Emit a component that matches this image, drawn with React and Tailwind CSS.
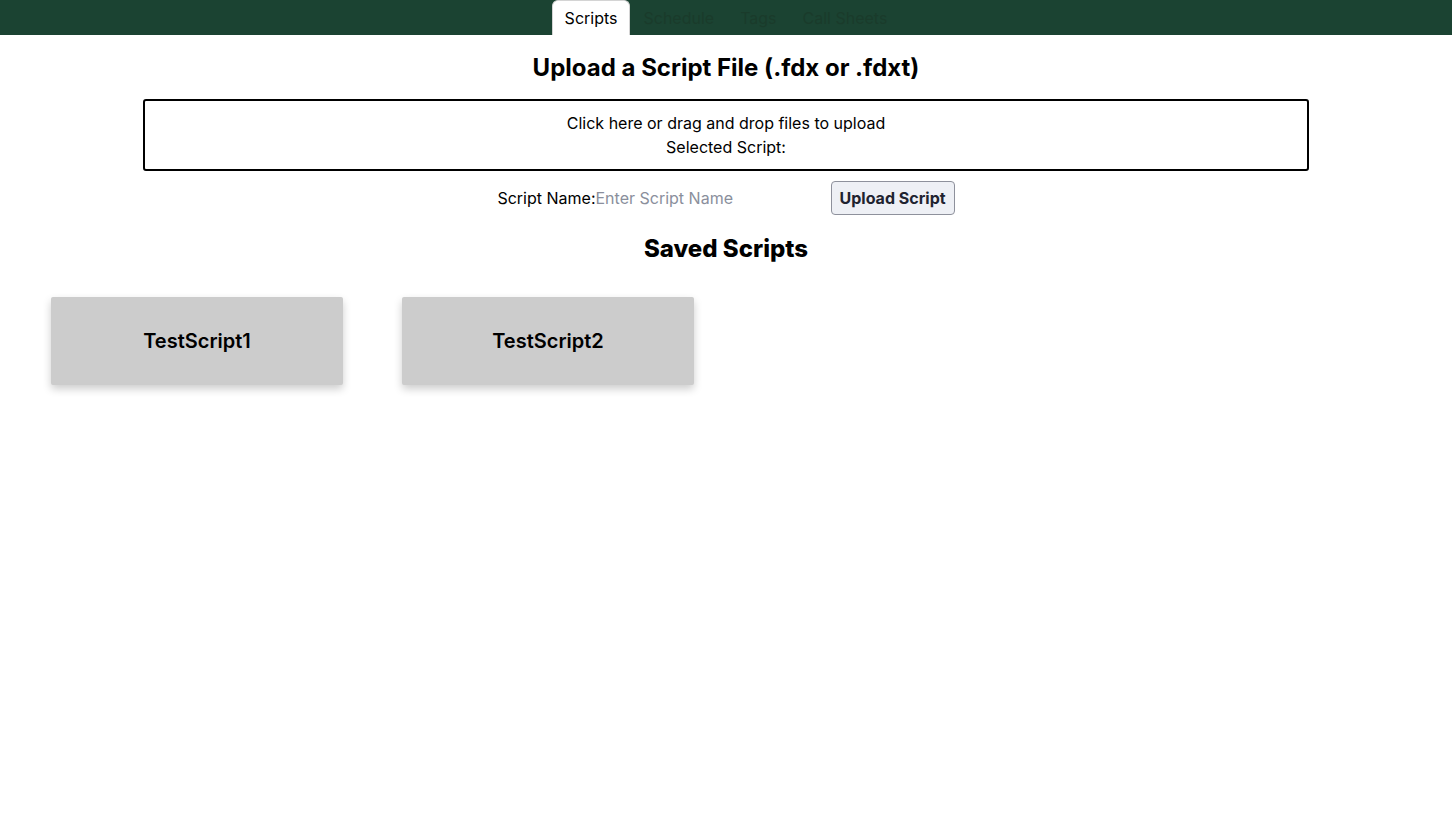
import React, { useState } from "react";

const tabs = ["Scripts", "Schedule", "Tags", "Call Sheets"];
const savedScripts = ["TestScript1", "TestScript2"];

const App = () => {
  const [active, setActive] = useState("Scripts");
  const [scriptName, setScriptName] = useState("");

  return (
    <div
      className="flex w-full min-h-screen flex-col bg-white text-black"
      style={{ fontFamily: "Inter, 'Noto Sans', sans-serif" }}
    >
      {/* top tabs */}
      <div className="flex w-full h-[35px] justify-center bg-[#1b4332]">
        <div className="flex h-full">
          {tabs.map((tab) => (
            <button
              key={tab}
              onClick={() => setActive(tab)}
              className={
                tab === active
                  ? "flex h-full items-center pl-[12px] pr-3 bg-white text-black rounded-t-md border border-b-0 border-[#d4d4d4] text-base"
                  : "flex h-full items-center px-[13px] text-[#1a3b2b] text-base"
              }
            >
              {tab}
            </button>
          ))}
        </div>
      </div>

      <div className="flex w-full flex-col items-center">
        <h2 className="mt-[18px] text-2xl font-bold leading-[30px]">
          Upload a Script File (.fdx or .fdxt)
        </h2>

        <div className="mt-[16px] flex w-4/5 box-content flex-col items-center border-2 border-black rounded-[3px] py-[10px] text-base leading-6 cursor-pointer">
          <span>Click here or drag and drop files to upload</span>
          <span>Selected Script:</span>
        </div>

        <div className="mt-[10px] flex items-center">
          <label className="text-base">Script Name:</label>
          <input
            value={scriptName}
            onChange={(e) => setScriptName(e.target.value)}
            placeholder="Enter Script Name"
            className="w-[235px] text-base outline-none placeholder:text-[#8a8f9c]"
          />
          <button className="h-[34px] px-2 rounded-[4px] border border-[#8e919c] bg-[#eef0f5] text-base font-bold text-[#1f2330]">
            Upload Script
          </button>
        </div>

        <h2 className="mt-[19px] text-2xl font-extrabold leading-[30px]">
          Saved Scripts
        </h2>
      </div>

      <div className="flex w-full px-[51px] pt-[33px] gap-[59px]">
        {savedScripts.map((name) => (
          <div
            key={name}
            className="flex w-[292px] h-[88px] items-center justify-center rounded-[2px] bg-[#cccccc] shadow-[0_4px_8px_rgba(0,0,0,0.2)]"
          >
            <span className="text-xl font-semibold">{name}</span>
          </div>
        ))}
      </div>
    </div>
  );
};

export default App;
